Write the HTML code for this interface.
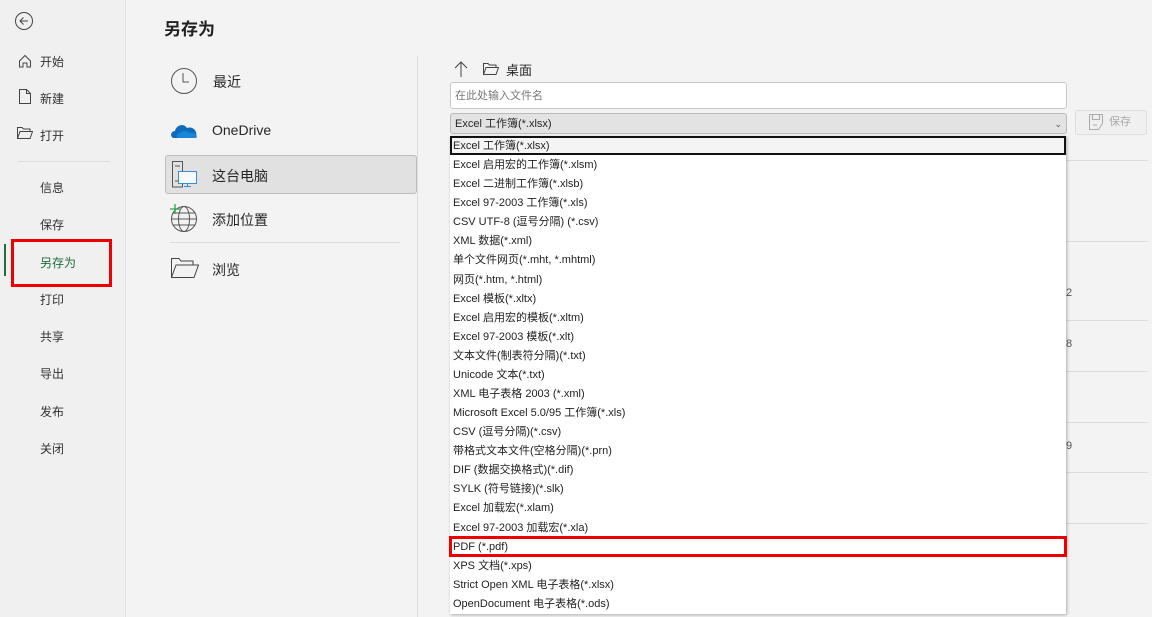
<!DOCTYPE html>
<html><head><meta charset="utf-8"><style>
*{margin:0;padding:0;box-sizing:border-box}
body{width:1152px;height:617px;overflow:hidden;background:#f3f3f3;font-family:"Liberation Sans","Noto Sans CJK SC",sans-serif;color:#262626;position:relative}
.a{position:absolute}
.side{left:0;top:0;width:126px;height:617px;background:#f0f0f0;border-right:1px solid #e1e1e1}
.nav{font-size:12px;color:#333}
.line{background:#dcdcdc;height:1px}
.dd{left:450px;top:136px;width:616px;height:478px;background:#fff;box-shadow:1px 1px 3px rgba(0,0,0,.3)}
.dd div{height:19.08px;line-height:20px;font-size:11px;padding-left:3px;color:#222;white-space:nowrap}
</style></head><body>
<div class="a side"></div>
<svg class="a" style="left:14px;top:11px" width="20" height="20"><circle cx="10" cy="10" r="8.5" fill="none" stroke="#444" stroke-width="1"/><path d="M14 10H6M9.5 6.5L6 10l3.5 3.5" fill="none" stroke="#444"/></svg>
<svg class="a" style="left:18px;top:54px" width="14" height="14"><path d="M1.5 7L7 1.5 12.5 7V13H9V9H5V13H1.5Z" fill="none" stroke="#444"/></svg>
<div class="a nav" style="left:40px;top:53px">开始</div>
<svg class="a" style="left:19px;top:89px" width="12" height="15"><path d="M.5.5H7.5L11.5 4.5V14.5H.5ZM7.5.5V4.5H11.5" fill="none" stroke="#444"/></svg>
<div class="a nav" style="left:40px;top:90px">新建</div>
<svg class="a" style="left:17px;top:127px" width="16" height="12"><path d="M.5 11.5V.5H5L6.5 2H13V4.5M.5 11.5L3 4.5H15.5L13 11.5Z" fill="none" stroke="#444"/></svg>
<div class="a nav" style="left:40px;top:127px">打开</div>
<div class="a line" style="left:18px;top:161px;width:92px"></div>
<div class="a nav" style="left:40px;top:179px">信息</div>
<div class="a nav" style="left:40px;top:216px">保存</div>
<div class="a" style="left:4px;top:244px;width:2px;height:32px;background:#1e6e3c"></div>
<div class="a nav" style="left:40px;top:254px;color:#1e6e3c">另存为</div>
<div class="a" style="left:11px;top:239px;width:101px;height:48px;border:3px solid #e00"></div>
<div class="a nav" style="left:40px;top:291px">打印</div>
<div class="a nav" style="left:40px;top:328px">共享</div>
<div class="a nav" style="left:40px;top:365px">导出</div>
<div class="a nav" style="left:40px;top:403px">发布</div>
<div class="a nav" style="left:40px;top:440px">关闭</div>

<div class="a" style="left:164px;top:15px;font-size:17px;font-weight:bold;color:#222">另存为</div>
<svg class="a" style="left:170px;top:67px" width="28" height="28"><circle cx="14" cy="14" r="12.5" fill="none" stroke="#555"/><path d="M13 6V15H19" fill="none" stroke="#555"/></svg>
<div class="a" style="left:213px;top:72px;font-size:14px">最近</div>
<svg class="a" style="left:171px;top:121px" width="28" height="18"><path d="M3 17C-1 17-1 10 4 10 5 4 13 2 16 7 22 5 27 10 25 17Z" fill="#0f6cbd"/><path d="M8 17C5 17 5 12 9 12 12 9 17 10 19 12 25 11 28 17 24 17Z" fill="#1a86d9"/></svg>
<div class="a" style="left:212px;top:122px;font-size:14px">OneDrive</div>
<div class="a" style="left:165px;top:155px;width:252px;height:39px;background:#e1e1e1;border:1px solid #bdbdbd;border-radius:3px"></div>
<svg class="a" style="left:171px;top:161px" width="28" height="28"><path d="M1.5.5H11.5V26H1.5ZM4 5H9M4 20H9" fill="none" stroke="#555"/><rect x="7.5" y="10.5" width="18" height="12" fill="#f5faff" stroke="#3a8bd8"/><path d="M16.5 22.5V25.5M13 25.5H20" stroke="#3a8bd8"/></svg>
<div class="a" style="left:212px;top:166px;font-size:14px">这台电脑</div>
<svg class="a" style="left:168px;top:203px" width="30" height="30"><circle cx="16" cy="16" r="12.5" fill="none" stroke="#555"/><ellipse cx="16" cy="16" rx="5.5" ry="12.5" fill="none" stroke="#555"/><path d="M3.5 16H28.5M5 10H27M5 22H27" stroke="#555" fill="none"/><path d="M7 1V11M2 6H12" stroke="#2aa84a" stroke-width="1.3"/></svg>
<div class="a" style="left:212px;top:210px;font-size:14px">添加位置</div>
<div class="a line" style="left:170px;top:242px;width:230px"></div>
<svg class="a" style="left:171px;top:258px" width="28" height="20"><path d="M.5 19.5V.5H8L10 3H22V7M.5 19.5L5 7H27.5L23 19.5Z" fill="none" stroke="#444"/></svg>
<div class="a" style="left:212px;top:260px;font-size:14px">浏览</div>
<div class="a" style="left:417px;top:56px;width:1px;height:561px;background:#dcdcdc"></div>

<svg class="a" style="left:454px;top:61px" width="14" height="16"><path d="M7 16V1M1 7L7 1 13 7" fill="none" stroke="#444"/></svg>
<svg class="a" style="left:483px;top:63px" width="16" height="12"><path d="M.5 11.5V.5H5L6.5 2H13V4.5M.5 11.5L3 4.5H15.5L13 11.5Z" fill="none" stroke="#444"/></svg>
<div class="a" style="left:506px;top:60px;font-size:13px">桌面</div>
<div class="a" style="left:450px;top:82px;width:617px;height:27px;background:#fff;border:1px solid #c8c8c8;border-radius:3px;font-size:11px;color:#777;line-height:27px;padding-left:4px">在此处输入文件名</div>
<div class="a" style="left:450px;top:113px;width:617px;height:21px;background:#e3e3e3;border:1px solid #bbb;border-radius:3px;font-size:11px;line-height:20px;padding-left:4px">Excel 工作簿(*.xlsx)<span style="position:absolute;right:4px;font-size:9px;color:#555">⌄</span></div>
<div class="a" style="left:1075px;top:110px;width:72px;height:25px;border:1px solid #ddd;border-radius:3px;background:#f0f0f0;font-size:11px;color:#aaa;line-height:23px;padding-left:33px">保存</div>
<svg class="a" style="left:1089px;top:114px" width="14" height="16"><path d="M.5.5H13.5V9.5L9.5 15.5H.5ZM3.5.5V5.5H10.5V.5M4 11H8" fill="none" stroke="#aaa"/></svg>

<div class="a line" style="left:1066px;top:160px;width:82px"></div>
<div class="a line" style="left:1066px;top:241px;width:82px"></div>
<div class="a line" style="left:1066px;top:320px;width:82px"></div>
<div class="a line" style="left:1066px;top:371px;width:82px"></div>
<div class="a line" style="left:1066px;top:422px;width:82px"></div>
<div class="a line" style="left:1066px;top:472px;width:82px"></div>
<div class="a line" style="left:1066px;top:523px;width:82px"></div>
<div class="a" style="left:1066px;top:287px;font-size:11px;color:#555">2</div>
<div class="a" style="left:1066px;top:338px;font-size:11px;color:#555">8</div>
<div class="a" style="left:1066px;top:440px;font-size:11px;color:#555">9</div>

<div class="a dd">
<div style="border:2px solid #111;line-height:16px;padding-left:1px;background:#f4f4f4">Excel 工作簿(*.xlsx)</div>
<div>Excel 启用宏的工作簿(*.xlsm)</div>
<div>Excel 二进制工作簿(*.xlsb)</div>
<div>Excel 97-2003 工作簿(*.xls)</div>
<div>CSV UTF-8 (逗号分隔) (*.csv)</div>
<div>XML 数据(*.xml)</div>
<div>单个文件网页(*.mht, *.mhtml)</div>
<div>网页(*.htm, *.html)</div>
<div>Excel 模板(*.xltx)</div>
<div>Excel 启用宏的模板(*.xltm)</div>
<div>Excel 97-2003 模板(*.xlt)</div>
<div>文本文件(制表符分隔)(*.txt)</div>
<div>Unicode 文本(*.txt)</div>
<div>XML 电子表格 2003 (*.xml)</div>
<div>Microsoft Excel 5.0/95 工作簿(*.xls)</div>
<div>CSV (逗号分隔)(*.csv)</div>
<div>带格式文本文件(空格分隔)(*.prn)</div>
<div>DIF (数据交换格式)(*.dif)</div>
<div>SYLK (符号链接)(*.slk)</div>
<div>Excel 加载宏(*.xlam)</div>
<div>Excel 97-2003 加载宏(*.xla)</div>
<div style="outline:3px solid #e00;outline-offset:-2px;padding-left:3px">PDF (*.pdf)</div>
<div>XPS 文档(*.xps)</div>
<div>Strict Open XML 电子表格(*.xlsx)</div>
<div>OpenDocument 电子表格(*.ods)</div>
</div>
</body></html>
